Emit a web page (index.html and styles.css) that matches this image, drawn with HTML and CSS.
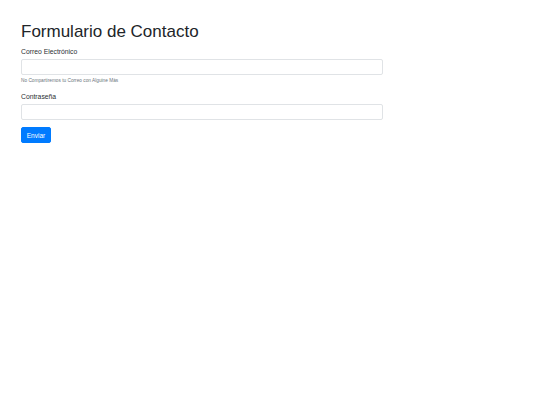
FILE: index.html
```html
<!DOCTYPE html>
<html lang="es">
<head>
<meta charset="utf-8">
<title>Formulario de Contacto</title>
<link rel="stylesheet" href="styles.css">
</head>
<body>
<div class="container">
  <h1 class="title">Formulario de Contacto</h1>
  <form class="form">
    <div class="group">
      <label class="label" for="email">Correo Electrónico</label>
      <input class="input" id="email" type="email">
      <small class="hint">No Compartiremos tu Correo con Alguine Màs</small>
    </div>
    <div class="group">
      <label class="label" for="pass">Contraseña</label>
      <input class="input" id="pass" type="password">
    </div>
    <button class="btn" type="button">Enviar</button>
  </form>
</div>
</body>
</html>
```
FILE: styles.css
```css
html, body {
  margin: 0;
  padding: 0;
  background: #ffffff;
}
body {
  font-family: "Liberation Sans", Arial, sans-serif;
  color: #212529;
}
.container {
  width: 362px;
  padding: 22px 0 0 21px;
}
.title {
  margin: 0 0 5px 0;
  font-size: 17px;
  font-weight: 400;
  line-height: 1.2;
}
.form {
  display: flex;
  flex-direction: column;
}
.group {
  display: flex;
  flex-direction: column;
  margin-bottom: 7px;
}
.group:first-child {
  margin-bottom: 8px;
}
.label {
  font-size: 6.8px;
  line-height: 9px;
  margin-bottom: 3px;
  color: #2b2f33;
}
.input {
  box-sizing: border-box;
  height: 16px;
  width: 100%;
  margin: 0;
  border: 1px solid #e0e3e6;
  border-radius: 2px;
  background: #fff;
  padding: 0 4px;
}
.hint {
  font-size: 4.75px;
  line-height: 7px;
  margin-top: 2px;
  color: #6c757d;
}
.btn {
  align-self: flex-start;
  box-sizing: border-box;
  width: 30px;
  height: 16px;
  padding: 0;
  border: 1px solid #007bff;
  border-radius: 2px;
  background: #007bff;
  color: #fff;
  font-family: "Liberation Sans", Arial, sans-serif;
  font-size: 6.5px;
}
```
